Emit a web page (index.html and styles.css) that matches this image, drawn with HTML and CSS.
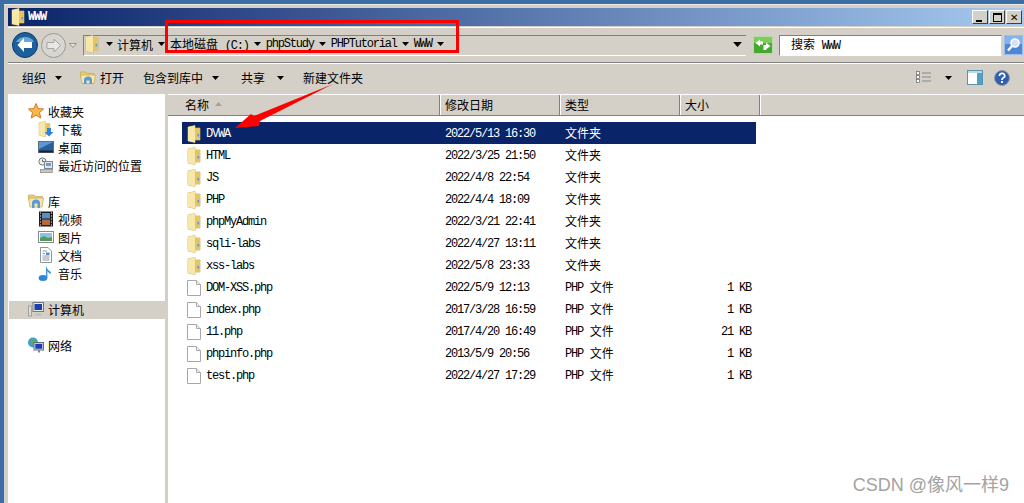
FILE: index.html
```html
<!DOCTYPE html>
<html lang="zh-CN">

<head>
    <meta charset="UTF-8">
    <meta name="viewport" content="width=device-width, initial-scale=1.0">
    <title>WWW</title>
    <link rel="stylesheet" href="styles.css">
</head>

<body>
    <!-- shared icons -->
    <svg class="defs" width="0" height="0">
        <symbol id="i-folder" viewBox="0 0 14 18">
            <path d="M1 2 L8 0.5 L8 3 L13 3 L13 15 L8 15 L8 17.5 L1 16 Z" fill="#f2d98a" stroke="#c9a84e" stroke-width=".7"/>
            <path d="M8 .5 L8 17.5 L1 16 L1 2 Z" fill="#f7e7a8"/>
            <rect x="8" y="3" width="5" height="12" fill="#e3c566"/>
            <rect x="10.5" y="9" width="1.6" height="2.5" fill="#5a9ad0"/>
        </symbol>
        <symbol id="i-file" viewBox="0 0 14 16">
            <path d="M.5 .5 H9.5 L13.5 4.5 V15.5 H.5 Z" fill="#fff" stroke="#a8a8a8"/>
            <path d="M9.5 .5 V4.5 H13.5" fill="#eee" stroke="#a8a8a8"/>
        </symbol>
        <symbol id="i-arrow" viewBox="0 0 7 4">
            <path d="M0 0 H7 L3.5 4 Z" fill="#000"/>
        </symbol>
    </svg>

    <div class="window">
        <div class="titlebar">
            <svg class="title-icon"><use href="#i-folder"/></svg>
            <span class="title-text lat">WWW</span>
            <div class="win-buttons">
                <span class="win-btn"><i class="glyph-min"></i></span>
                <span class="win-btn"><i class="glyph-max"></i></span>
                <span class="win-btn close">✕</span>
            </div>
        </div>

        <div class="navbar">
            <svg class="nav-back" width="26" height="26" viewBox="0 0 26 26">
                <circle cx="13" cy="13" r="12.5" fill="#1c5f9c" stroke="#0d3c6c"/>
                <path d="M4 10 A10 9 0 0 1 22 10 Z" fill="#6aa8d8"/>
                <path d="M12 6 L5.5 13 L12 20 V16 H20 V10 H12 Z" fill="#fff"/>
            </svg>
            <svg class="nav-forward" width="25" height="25" viewBox="0 0 25 25">
                <circle cx="12.5" cy="12.5" r="12" fill="#d8d6d0" stroke="#9a9a96"/>
                <path d="M13 6 L19.5 12.5 L13 19 V15.5 H6 V9.5 H13 Z" fill="#e8e7e3" stroke="#a5a5a1"/>
            </svg>
            <svg class="nav-drop" width="8" height="5" viewBox="0 0 8 5"><path d="M.5 .5 H7.5 L4 4.5 Z" fill="#e6e4de" stroke="#85857f" stroke-width=".8"/></svg>

            <div class="address">
                <svg class="address-icon"><use href="#i-folder"/></svg>
                <svg class="crumb-arrow first"><use href="#i-arrow"/></svg>
                <span class="crumb">计算机</span>
                <svg class="crumb-arrow"><use href="#i-arrow"/></svg>
                <span class="crumb">本地磁盘 <span class="lat drive">(C:)</span></span>
                <svg class="crumb-arrow"><use href="#i-arrow"/></svg>
                <span class="crumb lat">phpStudy</span>
                <svg class="crumb-arrow"><use href="#i-arrow"/></svg>
                <span class="crumb lat">PHPTutorial</span>
                <svg class="crumb-arrow"><use href="#i-arrow"/></svg>
                <span class="crumb lat">WWW</span>
                <svg class="crumb-arrow"><use href="#i-arrow"/></svg>
                <svg class="address-drop"><use href="#i-arrow"/></svg>
            </div>

            <svg class="refresh" width="20" height="18" viewBox="0 0 20 18">
                <rect x=".5" y=".5" width="19" height="17" fill="#45a82f" stroke="#b8d8b0"/>
                <rect x="1" y="1" width="18" height="6" fill="#7fcc5c"/>
                <path d="M2.5 7 L7 3.5 V5.5 H10 V8.5 H7 V10.5 Z M17.5 10 L13 13.5 V11.5 V14 H10.5 V9 H13 V6.5 Z" fill="#fff"/>
            </svg>

            <div class="search"><span>搜索 <span class="lat search-scope">WWW</span></span></div>
            <svg class="search-btn" width="19" height="20" viewBox="0 0 19 20">
                <rect x=".5" y=".5" width="18" height="19" fill="#4d86d6" stroke="#9cbcea"/>
                <rect x="1" y="1" width="17" height="8" fill="#86b2ec"/>
                <circle cx="11" cy="8" r="4" fill="#cfe4fa" stroke="#fff" stroke-width="1.6"/>
                <path d="M8 11 L4 15.5" stroke="#fff" stroke-width="2.4"/>
            </svg>
        </div>

        <div class="cmdbar">
            <span class="cmd">组织<svg class="cmd-arrow"><use href="#i-arrow"/></svg></span>
            <span class="cmd open">
                <svg width="16" height="15" viewBox="0 0 16 15">
                    <path d="M.5 2 H6 L7 3.5 H14 V7 H.5 Z" fill="#e9cf7c" stroke="#c4a654" stroke-width=".7"/>
                    <path d="M.5 5 H15.5 L14 13.5 H2 Z" fill="#f6e7ad" stroke="#c4a654" stroke-width=".7"/>
                    <path d="M4 14 V10 A4 3.5 0 0 1 12 10 V14 H9.5 V10.5 H6.5 V14 Z" fill="#5a9ad6"/>
                </svg>
                打开
            </span>
            <span class="cmd lib">包含到库中<svg class="cmd-arrow"><use href="#i-arrow"/></svg></span>
            <span class="cmd share">共享<svg class="cmd-arrow"><use href="#i-arrow"/></svg></span>
            <span class="cmd newdir">新建文件夹</span>
            <div class="cmd-right">
                <svg width="15" height="13" viewBox="0 0 15 13">
                    <rect x=".5" y=".5" width="3" height="3" fill="#fff" stroke="#666" stroke-width=".7"/>
                    <rect x=".5" y="4.5" width="3" height="3" fill="#fff" stroke="#666" stroke-width=".7"/>
                    <rect x=".5" y="8.5" width="3" height="3" fill="#fff" stroke="#666" stroke-width=".7"/>
                    <path d="M6 2 H15 M6 6 H15 M6 10 H15" stroke="#888"/>
                </svg>
                <svg class="view-arrow"><use href="#i-arrow"/></svg>
                <svg class="pane-icon" width="16" height="15" viewBox="0 0 16 15">
                    <rect x=".5" y=".5" width="15" height="14" fill="#fff" stroke="#5c93a8"/>
                    <rect x="1" y="1" width="14" height="2" fill="#b9dbe8"/>
                    <rect x="10" y="3" width="5" height="11" fill="#4da3c6"/>
                </svg>
                <svg class="help-icon" width="16" height="16" viewBox="0 0 16 16">
                    <circle cx="8" cy="8" r="7.5" fill="#2f5fb0" stroke="#9a9a9a"/>
                    <path d="M5.5 6 A2.6 2.4 0 1 1 9 8 Q8 8.6 8 10" fill="none" stroke="#fff" stroke-width="1.7"/>
                    <rect x="7" y="11" width="2" height="2" fill="#fff"/>
                </svg>
            </div>
        </div>

        <div class="main">
            <nav class="sidebar">
                <div class="tree-group">
                    <div class="tree-row">
                        <svg class="tree-icon" viewBox="0 0 16 16"><path d="M8 .5 L10.2 5.6 L15.6 6 L11.5 9.6 L12.8 15 L8 12.1 L3.2 15 L4.5 9.6 L.4 6 L5.8 5.6 Z" fill="#f7b84a" stroke="#d9762a"/></svg>
                        收藏夹
                    </div>
                    <div class="tree-row sub">
                        <svg class="tree-icon" viewBox="0 0 16 16"><use href="#i-folder" width="13" height="16"/><path d="M9 7 H13 V11 H15.5 L11 15.5 L6.5 11 H9 Z" fill="#2d86d8"/></svg>
                        下载
                    </div>
                    <div class="tree-row sub">
                        <svg class="tree-icon" viewBox="0 0 16 16"><rect x=".5" y="2.5" width="15" height="11" fill="#2a5f9e" stroke="#5d6f80"/><path d="M1 3 H15 L1 10 Z" fill="#5f97cf"/><rect x="1" y="11.5" width="14" height="2" fill="#222"/></svg>
                        桌面
                    </div>
                    <div class="tree-row sub">
                        <svg class="tree-icon" viewBox="0 0 16 16"><circle cx="4.5" cy="4.5" r="3.6" fill="#eee" stroke="#777"/><path d="M4.5 2.5 V4.5 H6.5" fill="none" stroke="#444" stroke-width=".8"/><rect x="6.5" y="4.5" width="8" height="7" fill="#dde6ee" stroke="#7a8894"/><rect x="8" y="6" width="5" height="3" fill="#6f9cc8"/><rect x="2.5" y="12.5" width="12" height="3" fill="#c8c8c4" stroke="#85857f" stroke-width=".7"/></svg>
                        最近访问的位置
                    </div>
                </div>

                <div class="tree-group">
                    <div class="tree-row">
                        <svg class="tree-icon" viewBox="0 0 16 16"><path d="M.5 2 H6 L7 3.5 H14.5 V7 H.5 Z" fill="#e9cf7c" stroke="#c4a654" stroke-width=".7"/><path d="M.5 5 H15.5 L14 14 H2 Z" fill="#f6e7ad" stroke="#c4a654" stroke-width=".7"/><path d="M4 15 V10 A4 3.5 0 0 1 12 10 V15 H9.5 V10.5 H6.5 V15 Z" fill="#5a9ad6"/></svg>
                        库
                    </div>
                    <div class="tree-row sub">
                        <svg class="tree-icon" viewBox="0 0 16 16"><rect x="1" y="0.5" width="14" height="15" fill="#1d1d1d"/><rect x="4" y="2" width="8" height="5.5" fill="#5b8fc4"/><rect x="4" y="8.5" width="8" height="5.5" fill="#b46a3c"/><path d="M2 2 H3 M2 5 H3 M2 8 H3 M2 11 H3 M2 14 H3 M13 2 H14 M13 5 H14 M13 8 H14 M13 11 H14 M13 14 H14" stroke="#fff"/></svg>
                        视频
                    </div>
                    <div class="tree-row sub">
                        <svg class="tree-icon" viewBox="0 0 16 16"><rect x=".5" y="2.5" width="15" height="11" fill="#fff" stroke="#8a8a8a"/><rect x="2" y="4" width="12" height="8" fill="#8cc3e0"/><path d="M2 12 V9 L6 7 L10 9 L14 8 V12 Z" fill="#4f9a5c"/></svg>
                        图片
                    </div>
                    <div class="tree-row sub">
                        <svg class="tree-icon" viewBox="0 0 16 16"><path d="M2.5 .5 H10 L13.5 4 V15.5 H2.5 Z" fill="#fff" stroke="#8a96a4"/><path d="M4.5 4 H9 M4.5 6.5 H7 M4.5 9 H11.5 M4.5 11 H11.5 M4.5 13 H11.5" stroke="#6c7c8c" stroke-width=".8"/><rect x="8" y="5.5" width="3.5" height="2.5" fill="#4f8fc4"/></svg>
                        文档
                    </div>
                    <div class="tree-row sub">
                        <svg class="tree-icon" viewBox="0 0 16 16"><ellipse cx="5" cy="13" rx="4.4" ry="3" fill="#2d86d8"/><path d="M8 13 V.5 Q9 5 13 7 L12.5 9 Q10 7.5 9.4 6 V13 Z" fill="#3a92e0"/></svg>
                        音乐
                    </div>
                </div>

                <div class="tree-group">
                    <div class="tree-row selected">
                        <svg class="tree-icon" viewBox="0 0 16 16"><rect x="0.5" y="5" width="3" height="10" fill="#dcdcd8" stroke="#8a8a86" stroke-width=".7"/><rect x="5" y="1.5" width="10.5" height="9" fill="#e8e8e4" stroke="#777"/><rect x="6.5" y="3" width="7.5" height="6" fill="#1c3fb0"/><path d="M8 12.5 H13 L14.5 14.5 H6.5 Z" fill="#bbb"/></svg>
                        计算机
                    </div>
                </div>

                <div class="tree-group">
                    <div class="tree-row">
                        <svg class="tree-icon" viewBox="0 0 16 16"><circle cx="5" cy="5.5" r="5" fill="#3e9fd0"/><path d="M2 2.5 L6 1.5 L7 5 L3.5 8 Z" fill="#5ab04c"/><rect x="6" y="5.5" width="9.5" height="7.5" fill="#e8e8e4" stroke="#5d6f80"/><rect x="7.3" y="6.8" width="7" height="5" fill="#1c3fb0"/><path d="M10 13 H12 V15.5 H10 Z" fill="#888"/></svg>
                        网络
                    </div>
                </div>
            </nav>

            <section class="content">
                <div class="list-header">
                    <div class="col-head col-name">名称<svg class="sort-arrow" width="7" height="4" viewBox="0 0 7 4"><path d="M0 4 H7 L3.5 0 Z" fill="#a3a19b"/></svg></div>
                    <div class="col-head col-date">修改日期</div>
                    <div class="col-head col-type">类型</div>
                    <div class="col-head col-size">大小</div>
                    <div class="col-head col-rest"></div>
                </div>

                <div class="file-list">
                    <div class="file-row selected">
                        <span class="cell-name"><svg class="file-icon"><use href="#i-folder"/></svg><span class="lat">DVWA</span></span>
                        <span class="lat">2022/5/13 16:30</span><span class="cell-type">文件夹</span><span></span>
                    </div>
                    <div class="file-row">
                        <span class="cell-name"><svg class="file-icon"><use href="#i-folder"/></svg><span class="lat">HTML</span></span>
                        <span class="lat">2022/3/25 21:50</span><span class="cell-type">文件夹</span><span></span>
                    </div>
                    <div class="file-row">
                        <span class="cell-name"><svg class="file-icon"><use href="#i-folder"/></svg><span class="lat">JS</span></span>
                        <span class="lat">2022/4/8 22:54</span><span class="cell-type">文件夹</span><span></span>
                    </div>
                    <div class="file-row">
                        <span class="cell-name"><svg class="file-icon"><use href="#i-folder"/></svg><span class="lat">PHP</span></span>
                        <span class="lat">2022/4/4 18:09</span><span class="cell-type">文件夹</span><span></span>
                    </div>
                    <div class="file-row">
                        <span class="cell-name"><svg class="file-icon"><use href="#i-folder"/></svg><span class="lat">phpMyAdmin</span></span>
                        <span class="lat">2022/3/21 22:41</span><span class="cell-type">文件夹</span><span></span>
                    </div>
                    <div class="file-row">
                        <span class="cell-name"><svg class="file-icon"><use href="#i-folder"/></svg><span class="lat">sqli-labs</span></span>
                        <span class="lat">2022/4/27 13:11</span><span class="cell-type">文件夹</span><span></span>
                    </div>
                    <div class="file-row">
                        <span class="cell-name"><svg class="file-icon"><use href="#i-folder"/></svg><span class="lat">xss-labs</span></span>
                        <span class="lat">2022/5/8 23:33</span><span class="cell-type">文件夹</span><span></span>
                    </div>
                    <div class="file-row">
                        <span class="cell-name"><svg class="file-icon"><use href="#i-file"/></svg><span class="lat">DOM-XSS.php</span></span>
                        <span class="lat">2022/5/9 12:13</span><span class="cell-type"><span class="lat">PHP</span> 文件</span><span class="cell-size lat">1 KB</span>
                    </div>
                    <div class="file-row">
                        <span class="cell-name"><svg class="file-icon"><use href="#i-file"/></svg><span class="lat">index.php</span></span>
                        <span class="lat">2017/3/28 16:59</span><span class="cell-type"><span class="lat">PHP</span> 文件</span><span class="cell-size lat">1 KB</span>
                    </div>
                    <div class="file-row">
                        <span class="cell-name"><svg class="file-icon"><use href="#i-file"/></svg><span class="lat">11.php</span></span>
                        <span class="lat">2017/4/20 16:49</span><span class="cell-type"><span class="lat">PHP</span> 文件</span><span class="cell-size lat">21 KB</span>
                    </div>
                    <div class="file-row">
                        <span class="cell-name"><svg class="file-icon"><use href="#i-file"/></svg><span class="lat">phpinfo.php</span></span>
                        <span class="lat">2013/5/9 20:56</span><span class="cell-type"><span class="lat">PHP</span> 文件</span><span class="cell-size lat">1 KB</span>
                    </div>
                    <div class="file-row">
                        <span class="cell-name"><svg class="file-icon"><use href="#i-file"/></svg><span class="lat">test.php</span></span>
                        <span class="lat">2022/4/27 17:29</span><span class="cell-type"><span class="lat">PHP</span> 文件</span><span class="cell-size lat">1 KB</span>
                    </div>
                </div>
            </section>
        </div>
    </div>

    <!-- annotations drawn over the screenshot -->
    <div class="mark-box"></div>
    <svg class="mark-arrow" width="110" height="55" viewBox="0 0 110 55">
        <path d="M98 1 L19 33 L16 31 L0 45 L24 43 L25 38 Z" fill="#f00"/>
    </svg>
    <div class="watermark">CSDN @像风一样9</div>
</body>

</html>
```

FILE: styles.css
```css
* {
    box-sizing: border-box;
}

html,
body {
    height: 100%;
}

body {
    margin: 0;
    overflow: hidden;
    background-color: #3a6ea5;
    font-family: "Noto Sans CJK SC", "Liberation Sans", sans-serif;
    font-size: 12px;
    color: #000;
}

.defs {
    position: absolute;
}

/* SimSun-like latin text, 6px per character */
.lat {
    font-family: "Liberation Mono", "Noto Sans CJK SC", monospace;
    font-size: 12px;
    letter-spacing: -1.2px;
}

.window {
    height: 499px;
    margin: 4px 0 0 4px;
    padding: 4px 0 0 4px;
    background-color: #d4d0c8;
    border-top: 1px solid #ece9e2;
    display: flex;
    flex-direction: column;
}

/* title bar */
.titlebar {
    height: 18px;
    margin-top: -1px;
    flex: none;
    display: flex;
    align-items: center;
    padding: 0 2px 0 3px;
    background: linear-gradient(to right, #0a246a, #a6caf0);
    color: #fff;
}

.title-icon {
    width: 14px;
    height: 18px;
}

.title-text {
    margin-left: 3px;
    font-weight: bold;
}

.win-buttons {
    margin-left: auto;
    display: flex;
    gap: 0;
}

.win-btn {
    width: 16px;
    height: 14px;
    margin-left: 1px;
    background-color: #d4d0c8;
    border: 1px solid;
    border-color: #fff #404040 #404040 #fff;
    display: flex;
    align-items: center;
    justify-content: center;
    position: relative;
    color: #000;
    font-size: 10px;
    line-height: 1;
}

.glyph-min {
    width: 6px;
    height: 2px;
    background-color: #000;
    margin-top: 7px;
    margin-right: 2px;
}

.glyph-max {
    width: 9px;
    height: 9px;
    border: 1px solid #000;
    border-top-width: 2px;
}

/* address row */
.navbar {
    height: 36px;
    flex: none;
    display: flex;
    align-items: center;
    padding-left: 4px;
    border-top: 1px solid #fff;
    border-bottom: 1px solid #808080;
    margin-top: 1px;
}

.nav-back {
    flex: none;
}

.nav-forward {
    margin-left: 3px;
    flex: none;
}

.nav-drop {
    margin: 0 5px 0 3px;
    flex: none;
}

.address {
    width: 663px;
    height: 21px;
    flex: none;
    margin-left: 1px;
    display: flex;
    align-items: center;
    border-top: 1px solid #808080;
    border-left: 1px solid #808080;
    border-bottom: 1px solid #fff;
    padding: 0 0 2px 1px;
}

.address-icon {
    width: 14px;
    height: 18px;
    flex: none;
}

.crumb-arrow {
    width: 7px;
    height: 4px;
    margin: 0 5px;
    flex: none;
}

.crumb-arrow.first {
    margin: 0 4px 0 7px;
}

.crumb {
    white-space: nowrap;
}

.drive {
    margin-left: 4px;
}

.address-drop {
    width: 9px;
    height: 5px;
    margin-left: auto;
    margin-right: 4px;
}

.refresh {
    margin-left: 7px;
    flex: none;
}

.search {
    width: 223px;
    height: 21px;
    margin-left: 6px;
    flex: none;
    background-color: #fff;
    border: 1px solid;
    border-color: #808080 #d4d0c8 #fff #808080;
    display: flex;
    align-items: center;
    padding: 0 0 2px 11px;
}

.search-scope {
    margin-left: 4px;
}

.search-btn {
    margin-left: 2px;
    flex: none;
}

/* command bar */
.cmdbar {
    height: 31px;
    flex: none;
    display: flex;
    align-items: center;
    border-top: 1px solid #fff;
    padding-bottom: 3px;
    font-size: 12px;
}

.cmd {
    display: flex;
    align-items: center;
    white-space: nowrap;
}

.cmd:first-child {
    margin-left: 14px;
}

.cmd-arrow {
    width: 7px;
    height: 4px;
    margin-left: 9px;
}

.open {
    margin-left: 18px;
    gap: 4px;
}

.lib {
    margin-left: 19px;
}

.share {
    margin-left: 22px;
}

.share .cmd-arrow {
    margin-left: 12px;
}

.newdir {
    margin-left: 19px;
}

.cmd-right {
    margin-left: auto;
    display: flex;
    align-items: center;
    padding-right: 14px;
}

.view-arrow {
    width: 7px;
    height: 4px;
    margin: 0 15px 0 14px;
}

.help-icon {
    margin-left: 11px;
}

/* main area */
.main {
    flex: 1;
    min-height: 0;
    display: flex;
}

.sidebar {
    width: 157px;
    flex: none;
    background-color: #fff;
    padding: 9px 0 0 1px;
    margin-right: 3px;
}

.tree-group {
    margin-bottom: 18px;
}

.tree-row {
    height: 18px;
    display: flex;
    align-items: center;
    padding: 0 0 2px 19px;
    white-space: nowrap;
}

.tree-row.sub {
    padding-left: 29px;
}

.tree-row.selected {
    background-color: #d4d0c8;
}

.tree-icon {
    width: 16px;
    height: 16px;
    margin-right: 4px;
    flex: none;
}

.content {
    flex: 1;
    min-width: 0;
    background-color: #fff;
    display: flex;
    flex-direction: column;
}

.list-header {
    height: 22px;
    flex: none;
    display: flex;
    background-color: #d4d0c8;
    border-bottom: 1px solid #808080;
    border-top: 1px solid #fff;
}

.col-head {
    display: flex;
    align-items: center;
    padding: 0 0 2px 5px;
    border-right: 1px solid #808080;
    box-shadow: 1px 0 0 #fff;
}

.col-name {
    width: 272px;
    padding-left: 17px;
}

.col-date {
    width: 120px;
}

.col-type {
    width: 120px;
}

.col-size {
    width: 80px;
}

.col-rest {
    flex: 1;
    border-right: 0;
    box-shadow: none;
}

.sort-arrow {
    margin-left: 6px;
}

.file-list {
    padding: 6px 0 0 14px;
}

.file-row {
    width: 574px;
    height: 22px;
    display: grid;
    grid-template-columns: 263px 120px 70px 121px;
    align-items: center;
}

.file-row > .lat {
    padding-top: 2px;
}

.file-row.selected {
    background-color: #0a246a;
    color: #fff;
}

.cell-name {
    display: flex;
    align-items: center;
    padding: 2px 0 0 5px;
}

.cell-type {
    padding-bottom: 2px;
}

.cell-type .lat {
    vertical-align: 1px;
    margin-right: 4px;
}

.file-icon {
    width: 14px;
    height: 18px;
    margin-right: 5px;
    flex: none;
}

.cell-size {
    text-align: right;
    padding-right: 5px;
}

/* annotations */
.mark-box {
    position: absolute;
    left: 165px;
    top: 20px;
    width: 294px;
    height: 33px;
    border: 3px solid #f00;
}

.mark-arrow {
    position: absolute;
    left: 235px;
    top: 83px;
}

.watermark {
    position: absolute;
    right: 15px;
    top: 475px;
    font-family: "Liberation Sans", "Noto Sans CJK SC", sans-serif;
    font-size: 18px;
    line-height: 20px;
    color: #a3a3a3;
}
```
